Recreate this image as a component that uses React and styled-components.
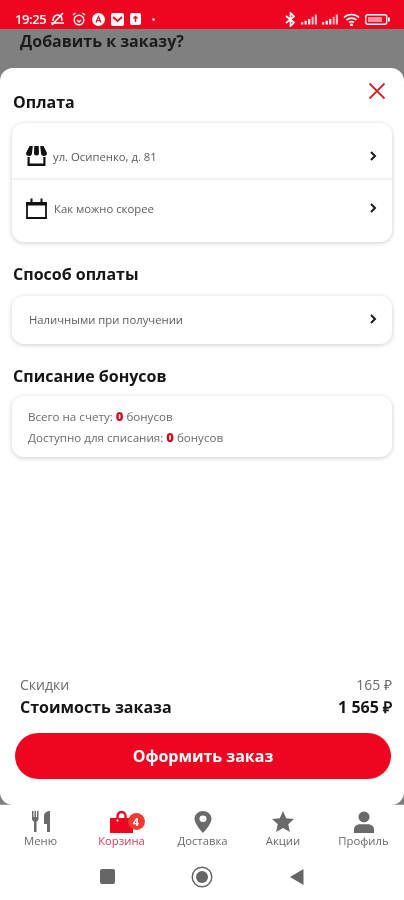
import React from "react";
import styled, { createGlobalStyle } from "styled-components";

const RED = "#ee0620";

const GlobalStyle = createGlobalStyle`
  html, body {
    margin: 0;
    padding: 0;
    background: #fff;
  }
  * {
    box-sizing: border-box;
  }
  body {
    font-family: "Open Sans", "Liberation Sans", sans-serif;
  }
`;

const Page = styled.div`
  width: 404px;
  height: 900px;
  display: flex;
  flex-direction: column;
  overflow: hidden;
  background: #fff;
  filter: blur(0.6px);
`;

const StatusBar = styled.div`
  height: 29px;
  flex: none;
  background: ${RED};
  display: flex;
  align-items: center;
  justify-content: space-between;
  padding: 9px 14px 0 15px;
  color: #fff;
`;

const StatusGroup = styled.div`
  display: flex;
  align-items: center;
  gap: ${(p) => p.$gap || 6}px;
`;

const Clock = styled.span`
  font-size: 13px;
  font-weight: 600;
  letter-spacing: -0.4px;
  margin-right: -3px;
`;

const NotifyDot = styled.span`
  display: flex;
  margin-left: 5px;
`;

const Backdrop = styled.div`
  flex: 1;
  display: flex;
  flex-direction: column;
  background: #808080;
`;

const BehindTitle = styled.div`
  height: 39px;
  flex: none;
  padding: 0 0 0 20px;
  font-size: 16px;
  line-height: 25px;
  font-weight: 700;
  color: #1c1c1c;
`;

const Sheet = styled.div`
  height: 737px;
  flex: none;
  background: #fff;
  border-radius: 13px;
  padding: 22px 12px 0;
  display: flex;
  flex-direction: column;
  position: relative;
`;

const Close = styled.button`
  position: absolute;
  top: 14px;
  right: 18px;
  width: 18px;
  height: 18px;
  padding: 0;
  border: 0;
  background: none;
  display: flex;
`;

const Heading = styled.h2`
  margin: ${(p) => p.$top || 0}px 0 0 1px;
  font-size: 16px;
  line-height: 24px;
  font-weight: 700;
  color: #151515;
`;

const Card = styled.div`
  margin-top: ${(p) => p.$top || 9}px;
  background: #fff;
  border-radius: 12px;
  box-shadow: 0 1px 5px rgba(0, 0, 0, 0.2);
`;

const Row = styled.div`
  height: ${(p) => p.$height || 55}px;
  padding: ${(p) => p.$pad || "0 14px 0 14px"};
  display: flex;
  align-items: center;
  gap: ${(p) => p.$gap || 6}px;
  font-size: 11.3px;
  color: #5c5c5c;
  & + & {
    border-top: 2px solid #f1f1f1;
  }
`;

const RowText = styled.span`
  flex: 1;
`;

const Bonus = styled.div`
  padding: 10px 16px 9px;
  font-size: 11.6px;
  line-height: 20px;
  color: #6a6a6a;
`;

const Zero = styled.b`
  font-size: 13px;
  font-weight: 800;
  color: #d4091f;
`;

const Spacer = styled.div`
  flex: 1;
`;

const Summary = styled.div`
  padding: 0 0 0 8px;
  display: flex;
  flex-direction: column;
`;

const SummaryRow = styled.div`
  display: flex;
  justify-content: space-between;
  font-size: ${(p) => (p.$total ? 16 : 14)}px;
  line-height: ${(p) => (p.$total ? 24 : 20)}px;
  font-weight: ${(p) => (p.$total ? 700 : 400)};
  color: ${(p) => (p.$total ? "#151515" : "#6a6a6a")};
`;

const OrderButton = styled.button`
  margin: 14px 1px 0 3px;
  height: 46px;
  flex: none;
  border: 0;
  border-radius: 23px;
  background: ${RED};
  color: #fff;
  font-family: inherit;
  font-size: 16px;
  font-weight: 700;
`;

const SheetFoot = styled.div`
  height: 26px;
  flex: none;
`;

const TabBar = styled.nav`
  height: 50px;
  flex: none;
  border-top: 1px solid #9a9a9a;
  margin-top: -1px;
  display: grid;
  grid-template-columns: 81px 81px 81px 80px 81px;
`;

const Tab = styled.div`
  position: relative;
  display: flex;
  flex-direction: column;
  align-items: center;
  padding-top: 5px;
  font-size: 11.3px;
  line-height: 14px;
  color: ${(p) => (p.$active ? "#d23a56" : "#6a6a6a")};
`;

const TabIcon = styled.div`
  height: 23px;
  margin-bottom: 1px;
  display: flex;
  align-items: center;
  position: relative;
`;

const Badge = styled.span`
  position: absolute;
  top: 3px;
  right: -11px;
  width: 17px;
  height: 17px;
  border-radius: 50%;
  background: #ee3a30;
  color: #fff;
  font-size: 11px;
  line-height: 17px;
  font-weight: 700;
  text-align: center;
`;

const SystemBar = styled.div`
  flex: 1;
  display: grid;
  grid-template-columns: 95px 95px 95px;
  justify-content: center;
  justify-items: center;
  align-items: center;
  padding-bottom: 1px;
`;

const Chevron = () => (
  <svg width="10" height="12" viewBox="0 0 10 12">
    <path d="M3 2l4 4-4 4" fill="none" stroke="#1a1a1a" strokeWidth="2" />
  </svg>
);

const StoreIcon = () => (
  <svg width="21" height="20" viewBox="0 0 21 20">
    <path d="M3.500 0H6.800L6 7a2.500 2.500 0 0 1-6 0zM8.300 0h4.400L13 7a2.500 2.500 0 0 1-5 0zM14.200 0h3.300L21 7a2.500 2.500 0 0 1-6 0z" fill="#111" />
    <path d="M1.500 11v9h18v-9h-2.200v6.500H3.700V11z" fill="#111" />
  </svg>
);

const CalendarIcon = () => (
  <svg width="21" height="21" viewBox="0 0 21 21">
    <path d="M1 5h19v15H1z" fill="none" stroke="#111" strokeWidth="1.800" />
    <path d="M0 4h21v3.500H0z" fill="#111" />
    <path d="M4.500 0.500h2v4h-2zM14.500 0.500h2v4h-2z" fill="#111" />
  </svg>
);

const FoodIcon = () => (
  <svg width="18" height="21" viewBox="0 0 18 21" fill="#6a6a6a">
    <path d="M0 0h1.500v6h1V0H4v6h1V0h1.500v7.500c0 1.700-1 2.700-2 3V21H2V10.500c-1-.3-2-1.300-2-3z" />
    <path d="M12 13V5c0-2.500 2-5 6-5v21h-3v-8z" />
  </svg>
);

const BagIcon = () => (
  <svg width="24" height="22" viewBox="0 0 24 22">
    <path d="M7.500 7V5a4 4 0 0 1 8 0v2" fill="none" stroke={RED} strokeWidth="2.400" />
    <path d="M0 7h23v15H0z" fill={RED} />
    <circle cx="7.500" cy="9.500" r="1.100" fill="#fff" />
  </svg>
);

const PinIcon = () => (
  <svg width="18" height="22" viewBox="0 0 18 24" preserveAspectRatio="none">
    <path
      fillRule="evenodd"
      d="M9 0a8.500 8.500 0 0 1 8.500 8.500C17.500 14.500 9 24 9 24S.5 14.500.5 8.500A8.500 8.500 0 0 1 9 0zm0 5a3.500 3.500 0 1 0 0 7 3.500 3.500 0 0 0 0-7z"
      fill="#6a6a6a"
    />
  </svg>
);

const StarIcon = () => (
  <svg width="22" height="21" viewBox="0 0 23 22">
    <path d="M11.500 0l3.400 7.500 8.100.9-6 5.500 1.700 8.100-7.200-4.100-7.200 4.100 1.700-8.100-6-5.500 8.100-.9z" fill="#6a6a6a" />
  </svg>
);

const PersonIcon = () => (
  <svg width="22" height="22" viewBox="0 0 24 24" fill="#6a6a6a">
    <circle cx="12" cy="6.500" r="6" />
    <path d="M1 24v-3.500C1 17 4 14.500 7.500 14.500h9c3.500 0 6.500 2.500 6.500 6V24z" />
  </svg>
);

// status bar icons, small and rough like the source
const MuteIcon = () => (
  <svg width="17" height="14" viewBox="0 0 17 14" fill="none" stroke="#fff" strokeWidth="1.600">
    <path d="M4 9c0-4 2-6 5-6s4 3 4 6M2 11h13M3 13 14 1" />
  </svg>
);

const AlarmIcon = () => (
  <svg width="14" height="14" viewBox="0 0 14 14" fill="none" stroke="#fff" strokeWidth="1.500">
    <circle cx="7" cy="8" r="4.800" />
    <path d="M1 3l2.500-2M13 3l-2.500-2M5 8l2 2 2-2" />
  </svg>
);

const CircleA = () => (
  <svg width="13" height="13" viewBox="0 0 13 13">
    <circle cx="6.500" cy="6.500" r="6.500" fill="#fff" />
    <path d="M4 9.500 6.500 3.500 9 9.500M5 7.500h3" fill="none" stroke={RED} strokeWidth="1.200" />
  </svg>
);

const MailBox = () => (
  <svg width="13" height="13" viewBox="0 0 13 13">
    <rect width="13" height="13" rx="2" fill="#fff" />
    <path d="M2 4l4.500 4L11 4" fill="none" stroke={RED} strokeWidth="2" />
  </svg>
);

const ArrowBox = () => (
  <svg width="11" height="12" viewBox="0 0 11 12">
    <rect width="11" height="12" rx="2" fill="#fff" />
    <path d="M5.500 9V4M3.500 5.500l2-2 2 2" fill="none" stroke={RED} strokeWidth="1.400" />
  </svg>
);

const Dot = () => (
  <svg width="3" height="3" viewBox="0 0 3 3">
    <circle cx="1.500" cy="1.500" r="1.300" fill="#fff" />
  </svg>
);

const BluetoothIcon = () => (
  <svg width="11" height="15" viewBox="0 0 11 15" fill="none" stroke="#fff" strokeWidth="1.700">
    <path d="M1 4l8 6.500L5.500 14V1L9 4.500 1 11" />
  </svg>
);

const SignalIcon = () => (
  <svg width="16" height="11" viewBox="0 0 18 11" fill="#fff">
    <path d="M0 8.500h2.500V11H0zM4 7h2.500v4H4zM8 5h2.500v6H8z" />
    <path d="M12 2.500h2.200V11H12zM15.500 0H18v11h-2.500z" opacity=".75" />
  </svg>
);

const WifiIcon = () => (
  <svg width="17" height="13" viewBox="0 0 17 13" fill="none" stroke="#fff" strokeWidth="1.700">
    <path d="M1 4.500c4-4 11-4 15 0M3.500 7c2.700-2.500 7.300-2.500 10 0M6 9.500c1.400-1 3.600-1 5 0" />
    <circle cx="8.500" cy="12" r=".6" fill="#fff" />
  </svg>
);

const BatteryIcon = () => (
  <svg width="25" height="11" viewBox="0 0 25 11">
    <rect x=".7" y=".7" width="21" height="9.600" rx="2" fill="none" stroke="#fff" strokeWidth="1.400" />
    <rect x="23" y="3.500" width="1.800" height="4" fill="#fff" />
    <rect x="3" y="3" width="14" height="5" fill="#fff" opacity=".55" />
  </svg>
);

const tabs = [
  { label: "Меню", icon: <FoodIcon /> },
  { label: "Корзина", icon: <BagIcon />, active: true, badge: 4 },
  { label: "Доставка", icon: <PinIcon /> },
  { label: "Акции", icon: <StarIcon /> },
  { label: "Профиль", icon: <PersonIcon /> },
];

export default function App() {
  return (
    <>
      <GlobalStyle />
      <Page>
        <StatusBar>
          <StatusGroup>
            <Clock>19:25</Clock>
            <MuteIcon />
            <AlarmIcon />
            <CircleA />
            <MailBox />
            <ArrowBox />
            <NotifyDot>
              <Dot />
            </NotifyDot>
          </StatusGroup>
          <StatusGroup $gap={5}>
            <BluetoothIcon />
            <SignalIcon />
            <SignalIcon />
            <WifiIcon />
            <BatteryIcon />
          </StatusGroup>
        </StatusBar>
        <Backdrop>
          <BehindTitle>Добавить к заказу?</BehindTitle>
          <Sheet>
            <Close aria-label="Закрыть">
              <svg width="18" height="18" viewBox="0 0 18 18">
                <path d="M1.500 1.500l15 15M16.500 1.500l-15 15" stroke="#d8232f" strokeWidth="1.800" />
              </svg>
            </Close>
            <Heading>Оплата</Heading>
            <Card $top={9}>
              <Row $pad="11px 14px 0 14px">
                <StoreIcon />
                <RowText>ул. Осипенко, д. 81</RowText>
                <Chevron />
              </Row>
              <Row $height={64} $pad="0 14px 6px 14px" $gap={7}>
                <CalendarIcon />
                <RowText>Как можно скорее</RowText>
                <Chevron />
              </Row>
            </Card>
            <Heading $top={20}>Способ оплаты</Heading>
            <Card $top={10}>
              <Row $height={48} $pad="0 14px 2px 17px">
                <RowText>Наличными при получении</RowText>
                <Chevron />
              </Row>
            </Card>
            <Heading $top={20}>Списание бонусов</Heading>
            <Card $top={8}>
              <Bonus>
                <div>
                  Всего на счету: <Zero>0</Zero> бонусов
                </div>
                <div>
                  Доступно для списания: <Zero>0</Zero> бонусов
                </div>
              </Bonus>
            </Card>
            <Spacer />
            <Summary>
              <SummaryRow>
                <span>Скидки</span>
                <span>165 ₽</span>
              </SummaryRow>
              <SummaryRow $total>
                <span>Стоимость заказа</span>
                <span>1 565 ₽</span>
              </SummaryRow>
            </Summary>
            <OrderButton>Оформить заказ</OrderButton>
            <SheetFoot />
          </Sheet>
        </Backdrop>
        <TabBar>
          {tabs.map((tab) => (
            <Tab key={tab.label} $active={tab.active}>
              <TabIcon>
                {tab.icon}
                {tab.badge && <Badge>{tab.badge}</Badge>}
              </TabIcon>
              {tab.label}
            </Tab>
          ))}
        </TabBar>
        <SystemBar>
          <svg width="15" height="15" viewBox="0 0 15 15">
            <rect width="15" height="15" rx="2" fill="#666" />
          </svg>
          <svg width="22" height="22" viewBox="0 0 22 22">
            <circle cx="11" cy="11" r="9.800" fill="none" stroke="#666" strokeWidth="1.400" />
            <circle cx="11" cy="11" r="6" fill="#666" />
          </svg>
          <svg width="14" height="16" viewBox="0 0 14 16">
            <path d="M13.500 0v16L0 8z" fill="#666" />
          </svg>
        </SystemBar>
      </Page>
    </>
  );
}
